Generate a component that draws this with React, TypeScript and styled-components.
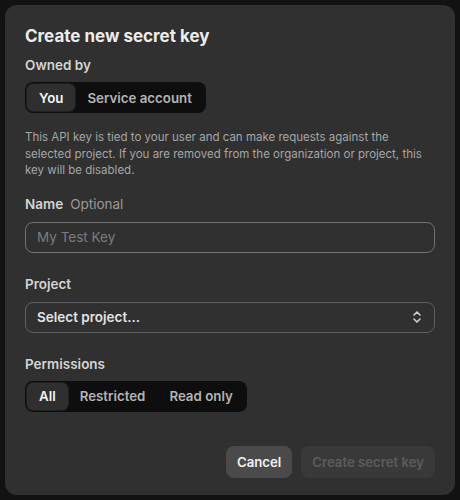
import React, { FC, useState } from 'react';
import styled, { createGlobalStyle } from 'styled-components';

const GlobalStyle = createGlobalStyle`
  html, body {
    margin: 0;
    padding: 0;
    background: #121212;
  }
  * {
    box-sizing: border-box;
  }
`;

const Page = styled.div`
  width: 460px;
  height: 500px;
  padding: 5px;
  background: #121212;
  font-family: Inter, 'Noto Sans', sans-serif;
`;

const Dialog = styled.div`
  height: 490px;
  background: #303030;
  border-radius: 12px;
  padding: 20px 20px 17px 20px;
  display: flex;
  flex-direction: column;
  color: #ececec;
`;

const Title = styled.h2`
  margin: 0;
  font-size: 17px;
  font-weight: 700;
  line-height: 22px;
  color: #ececec;
`;

const Label = styled.div<{ $top: number }>`
  margin-top: ${({ $top }) => $top}px;
  font-size: 13.5px;
  font-weight: 600;
  line-height: 18px;
  color: #d4d4d4;
  display: flex;
  gap: 7px;
`;

const Hint = styled.span`
  font-weight: 400;
  color: #9a9a9a;
`;

const Segmented = styled.div`
  margin-top: 8px;
  align-self: flex-start;
  display: flex;
  padding: 2px;
  height: 31px;
  background: #0e0e0e;
  border-radius: 8px;
`;

const Segment = styled.button<{ $active: boolean }>`
  border: none;
  font-family: inherit;
  font-size: 13.3px;
  font-weight: 600;
  padding: 0 12px;
  border-radius: 6px;
  cursor: pointer;
  background: ${({ $active }) => ($active ? '#2f2f2f' : 'transparent')};
  color: ${({ $active }) => ($active ? '#f4f4f4' : '#b4b4b4')};
  ${({ $active }) => ($active ? 'box-shadow: 0 0 0 1px #1f1f1f;' : '')}
`;

const Description = styled.p`
  margin: 16px 0 0 0;
  font-size: 11.5px;
  line-height: 16.5px;
  color: #a6a6a6;
`;

const Input = styled.input`
  margin-top: 9px;
  height: 31px;
  width: 100%;
  background: transparent;
  border: 1px solid #727272;
  border-radius: 8px;
  padding: 0 11px;
  font-family: inherit;
  font-size: 13.5px;
  color: #ececec;
  outline: none;
  &::placeholder {
    color: #7c7c7c;
  }
`;

const Select = styled.div`
  margin-top: 9px;
  height: 31px;
  border: 1px solid #5f5f5f;
  border-radius: 8px;
  padding: 0 11px;
  display: flex;
  align-items: center;
  justify-content: space-between;
  font-size: 13.5px;
  font-weight: 600;
  color: #e2e2e2;
`;

const Footer = styled.div`
  margin-top: auto;
  display: flex;
  justify-content: flex-end;
  gap: 9px;
`;

const Button = styled.button<{ $disabled?: boolean }>`
  height: 32px;
  border: none;
  border-radius: 8px;
  padding: 0 11px;
  font-family: inherit;
  font-size: 13.2px;
  font-weight: 600;
  background: ${({ $disabled }) => ($disabled ? '#393939' : '#4a4a4a')};
  color: ${({ $disabled }) => ($disabled ? '#5c5c5c' : '#f2f2f2')};
`;

const Chevrons: FC = () => (
  <svg width="12" height="14" viewBox="0 0 12 14" fill="none">
    <path d="M3 5l3-3 3 3M3 9l3 3 3-3" stroke="#d0d0d0" strokeWidth="1.6" strokeLinecap="round" strokeLinejoin="round" />
  </svg>
);

const App: FC = () => {
  const [owner, setOwner] = useState('You');
  const [perm, setPerm] = useState('All');

  return (
    <Page>
      <GlobalStyle />
      <Dialog>
        <Title>Create new secret key</Title>
        <Label $top={9}>Owned by</Label>
        <Segmented>
          {['You', 'Service account'].map((o) => (
            <Segment key={o} $active={owner === o} onClick={() => setOwner(o)}>
              {o}
            </Segment>
          ))}
        </Segmented>
        <Description>
          This API key is tied to your user and can make requests against the selected project. If you are removed
          from the organization or project, this key will be disabled.
        </Description>
        <Label $top={16}>
          Name <Hint>Optional</Hint>
        </Label>
        <Input placeholder="My Test Key" />
        <Label $top={22}>Project</Label>
        <Select>
          <span>Select project...</span>
          <Chevrons />
        </Select>
        <Label $top={22}>Permissions</Label>
        <Segmented>
          {['All', 'Restricted', 'Read only'].map((p) => (
            <Segment key={p} $active={perm === p} onClick={() => setPerm(p)}>
              {p}
            </Segment>
          ))}
        </Segmented>
        <Footer>
          <Button>Cancel</Button>
          <Button $disabled>Create secret key</Button>
        </Footer>
      </Dialog>
    </Page>
  );
};

export default App;
